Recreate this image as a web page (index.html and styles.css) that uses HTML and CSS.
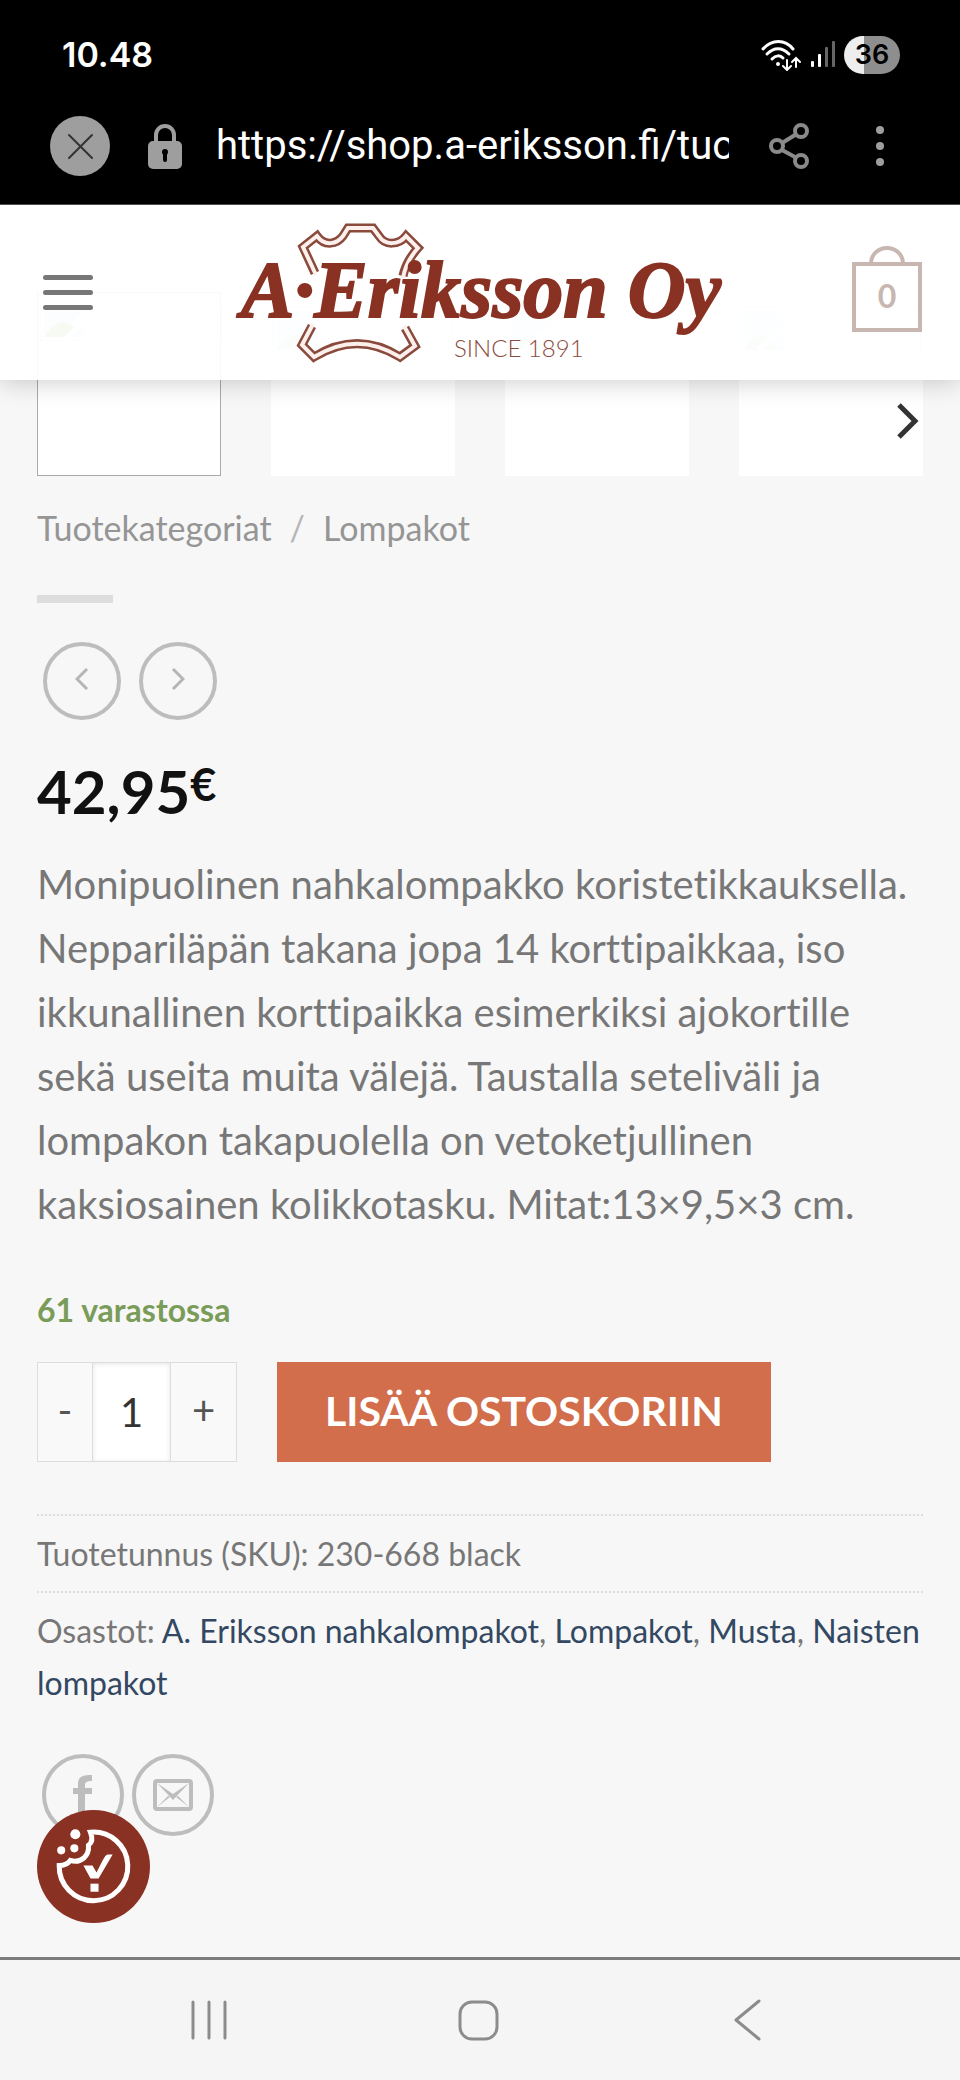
FILE: index.html
```html
<!DOCTYPE html>
<html lang="fi">
<head>
    <meta charset="UTF-8">
    <meta name="viewport" content="width=device-width, initial-scale=1">
    <title>A. Eriksson Oy</title>
    <link rel="stylesheet" href="styles.css">
</head>
<body>

    <!-- phone status bar -->
    <div class="status-bar">
        <span class="clock">10.48</span>
        <div class="status-icons">
            <svg width="42" height="32" viewBox="0 0 42 32" fill="none" stroke="#fff" stroke-width="3" stroke-linecap="round">
                <path d="M3 10C12 0 25 0 33 10"/>
                <path d="M7 15C14 8 22 8 29 15"/>
                <path d="M12 20C16 16 20 16 23 19"/>
                <circle cx="18" cy="25" r="2" fill="#fff" stroke="none"/>
                <path d="M27 21v9M23 27l4 4 4-4" stroke-width="2"/>
                <path d="M36 28V19M32 23l4-4 4 4" stroke-width="2"/>
            </svg>
            <svg width="26" height="28" viewBox="0 0 26 28">
                <rect x="1" y="20" width="3" height="6" rx="1" fill="#fff"/>
                <rect x="8" y="13" width="3" height="13" rx="1" fill="#fff"/>
                <rect x="15" y="6" width="3" height="20" rx="1" fill="#666"/>
                <rect x="22" y="0" width="3" height="26" rx="1" fill="#666"/>
            </svg>
            <span class="battery">36</span>
        </div>
    </div>

    <!-- browser bar -->
    <div class="url-bar">
        <button class="close-tab" aria-label="Sulje">
            <svg width="60" height="60" viewBox="0 0 60 60" stroke="#333" stroke-width="2" stroke-linecap="round">
                <circle cx="30" cy="30" r="30" fill="#9e9e9e" stroke="none"/>
                <path d="M19 19l23 23M42 19L19 42"/>
            </svg>
        </button>
        <svg class="lock" width="34" height="46" viewBox="0 0 34 46">
            <path d="M8 20V12a9 9 0 0 1 18 0v8" fill="none" stroke="#9e9e9e" stroke-width="4"/>
            <rect x="0" y="18" width="34" height="28" rx="5" fill="#9e9e9e"/>
            <circle cx="17" cy="29" r="3" fill="#000"/>
            <path d="M17 29v8" stroke="#000" stroke-width="4" stroke-linecap="round"/>
        </svg>
        <input class="url" type="text" aria-label="Osoite" value="https://shop.a-eriksson.fi/tuo">
        <button class="share" aria-label="Jaa">
            <svg width="40" height="46" viewBox="0 0 40 46" fill="none" stroke="#8a8a8a" stroke-width="4">
                <path d="M13 20l13-8M13 27l13 7"/>
                <circle cx="8" cy="23" r="6"/>
                <circle cx="32" cy="8" r="6"/>
                <circle cx="32" cy="38" r="6"/>
            </svg>
        </button>
        <button aria-label="Valikko">
            <svg width="10" height="42" viewBox="0 0 10 42" fill="#9e9e9e">
                <circle cx="5" cy="5" r="4"/>
                <circle cx="5" cy="21" r="4"/>
                <circle cx="5" cy="37" r="4"/>
            </svg>
        </button>
    </div>

    <header class="header">
        <button class="menu" aria-label="Menu">
            <span></span>
            <span></span>
            <span></span>
        </button>
        <a class="logo" href="#">
            <svg width="500" height="146" viewBox="0 0 500 146">
                <g class="hide-outer">
                    <path d="M82 53L70 27 84 16C92 27 104 24 110 16L115 8H140L146 16C152 26 166 25 173 16L185 28C176 38 172 46 170 56"/>
                    <path d="M79 106L69 125 81 137C110 119 138 119 167 137L182 126 172 108"/>
                </g>
                <g class="hide-inner">
                    <path d="M83 55L70 27 84 16C92 27 104 24 110 16L115 8H140L146 16C152 26 166 25 173 16L185 28C176 38 172 46 170 58"/>
                    <path d="M80 104L69 125 81 137C110 119 138 119 167 137L182 126 171 106"/>
                </g>
                <text class="logo-name" x="8" y="97">A·Eriksson Oy</text>
                <text class="logo-since" x="221" y="137">SINCE 1891</text>
            </svg>
        </a>
        <a class="cart" href="#" aria-label="Ostoskori">
            <svg width="72" height="94" viewBox="0 0 72 94" fill="none" stroke="#c8b6b0" stroke-width="4">
                <path d="M20 17a16 15 0 0 1 32 0"/>
                <rect x="3" y="18" width="66" height="66"/>
                <text class="cart-count" x="36" y="62">0</text>
            </svg>
        </a>
    </header>

    <main class="product">

        <div class="gallery">
            <div class="thumb active"><span class="missing"><svg width="40" height="26" viewBox="0 0 40 26"><path d="M0 0h40L14 26H0z" fill="#c5d8ee"/><path d="M2 26c6-16 20-18 28-10L20 26z" fill="#7fb25a"/><path d="M26 26l14-12v12z" fill="#c5d8ee"/></svg></span></div>
            <div class="thumb"><span class="missing"><svg width="40" height="40" viewBox="0 0 40 40"><path d="M0 0h28l12 12v28H0z" fill="#e3ecf6"/><path d="M0 40c6-16 22-18 30-6l4 6z" fill="#c3dcb2"/><path d="M14 40L40 16" stroke="#fff" stroke-width="6"/></svg></span></div>
            <div class="thumb"><span class="missing"><svg width="40" height="40" viewBox="0 0 40 40"><path d="M0 0h28l12 12v28H0z" fill="#e3ecf6"/><path d="M0 40c6-16 22-18 30-6l4 6z" fill="#c3dcb2"/><path d="M14 40L40 16" stroke="#fff" stroke-width="6"/></svg></span></div>
            <div class="thumb"><span class="missing"><svg width="40" height="40" viewBox="0 0 40 40"><path d="M0 0h28l12 12v28H0z" fill="#e3ecf6"/><path d="M0 40c6-16 22-18 30-6l4 6z" fill="#c3dcb2"/><path d="M14 40L40 16" stroke="#fff" stroke-width="6"/></svg></span></div>
            <button class="next" aria-label="Seuraava">
                <svg width="22" height="36" viewBox="0 0 22 36" fill="none" stroke="#333" stroke-width="5">
                    <path d="M2 2l16 16L2 34"/>
                </svg>
            </button>
        </div>

        <nav class="breadcrumb">
            <a href="#">Tuotekategoriat</a>
            <span class="divider">/</span>
            <a href="#">Lompakot</a>
        </nav>

        <div class="small-bar"></div>

        <div class="prev-next">
            <a href="#" aria-label="Edellinen tuote">
                <svg width="14" height="22" viewBox="0 0 14 22"><path d="M12 1L2 11l10 10"/></svg>
            </a>
            <a href="#" aria-label="Seuraava tuote">
                <svg width="14" height="22" viewBox="0 0 14 22"><path d="M2 1l10 10L2 21"/></svg>
            </a>
        </div>

        <p class="price">42,95<span class="currency">€</span></p>

        <p class="description">Monipuolinen nahkalompakko koristetikkauksella. Nepparil&auml;p&auml;n takana jopa 14 korttipaikkaa, iso ikkunallinen korttipaikka esimerkiksi ajokortille sek&auml; useita muita v&auml;lej&auml;. Taustalla seteliv&auml;li ja lompakon takapuolella on vetoketjullinen kaksiosainen kolikkotasku. Mitat:13×9,5×3 cm.</p>

        <p class="stock">61 varastossa</p>

        <form class="cart-form">
            <div class="quantity">
                <button type="button">-</button>
                <input type="text" inputmode="numeric" aria-label="Määrä" value="1">
                <button type="button">+</button>
            </div>
            <button class="add-to-cart" type="button">LISÄÄ OSTOSKORIIN</button>
        </form>

        <div class="meta">
            <p>Tuotetunnus (SKU): 230-668 black</p>
            <p>Osastot: <a href="#">A. Eriksson nahkalompakot</a>, <a href="#">Lompakot</a>, <a href="#">Musta</a>, <a href="#">Naisten lompakot</a></p>
        </div>

        <div class="social">
            <a href="#" aria-label="Facebook">
                <svg width="20" height="42" viewBox="0 0 20 42" fill="#bdbdbd">
                    <path d="M5 42V20H0v-6h5V10C5 3 9 1 19 1v6c-5 0-7 1-7 4v3h7v6h-7v22z"/>
                </svg>
            </a>
            <a href="#" aria-label="Sähköposti">
                <svg width="40" height="32" viewBox="0 0 40 32">
                    <rect x="2" y="2" width="36" height="28" rx="2" fill="none" stroke="#bdbdbd" stroke-width="4"/>
                    <path d="M4 4l16 17L36 4 20 15zM4 28l11-11 2 1zM36 28L25 17l-2 1z" fill="#bdbdbd"/>
                </svg>
            </a>
        </div>

    </main>

    <!-- cookie consent button -->
    <button class="cookie" aria-label="Evästeasetukset">
        <svg width="113" height="113" viewBox="0 0 112 112">
            <g fill="#fff">
                <circle cx="38" cy="24" r="5"/>
                <circle cx="24" cy="40" r="4"/>
                <circle cx="37" cy="38" r="4"/>
                <path d="M46 55h9l4 7 6-12q3-6 5-6h5L61 68h-8z"/>
                <rect x="53" y="73" width="8" height="8"/>
            </g>
            <path d="M53 22A34 34 0 1 1 22 55C27 55 30 54 33 50C43 53 52 46 51 35C55 32 55 27 53 22z" fill="none" stroke="#fff" stroke-width="5"/>
        </svg>
    </button>

    <!-- phone navigation -->
    <div class="nav-bar">
        <button aria-label="Viimeisimmät">
            <svg width="42" height="42" viewBox="0 0 42 42"><path d="M5 3v36M21 3v36M37 3v36"/></svg>
        </button>
        <button aria-label="Koti">
            <svg width="42" height="42" viewBox="0 0 42 42"><rect x="3" y="3" width="37" height="37" rx="12"/></svg>
        </button>
        <button aria-label="Takaisin">
            <svg width="42" height="42" viewBox="0 0 42 42"><path d="M33 2L10 21l23 19"/></svg>
        </button>
    </div>

</body>
</html>
```
FILE: styles.css
```css
* {
    box-sizing: border-box;
}

body {
    margin: 0;
    min-height: 100vh;
    display: flex;
    flex-direction: column;
    background: #f7f7f7;
    color: #777;
    font-family: Lato, sans-serif;
    font-size: 40px;
    font-variant-ligatures: none;
    line-height: 64px;
}

p {
    margin: 0;
}

a {
    color: #334862;
    text-decoration: none;
}

button {
    padding: 0;
    border: none;
    background: none;
    font-family: inherit;
    cursor: pointer;
}

svg {
    display: block;
}

/* status bar */
.status-bar {
    display: flex;
    justify-content: space-between;
    align-items: center;
    height: 88px;
    padding: 22px 60px 0 62px;
    background: #000;
    color: #fff;
}

.clock {
    font-family: Inter, sans-serif;
    font-size: 34px;
    font-weight: 600;
}

.status-icons {
    display: flex;
    align-items: center;
    gap: 8px;
}

.battery {
    width: 56px;
    height: 38px;
    border-radius: 19px;
    background: linear-gradient(to right, #eee 20px, #8e8e8e 20px);
    color: #000;
    font-family: Inter, sans-serif;
    font-size: 27px;
    font-weight: 600;
    line-height: 38px;
    text-align: center;
}

/* url bar */
.url-bar {
    display: flex;
    align-items: center;
    height: 117px;
    padding: 0 75px 0 50px;
    border-bottom: 1px solid #555;
    background: #000;
}

.lock {
    margin: 0 34px 0 38px;
}

.url {
    flex: 1;
    min-width: 0;
    padding: 0;
    border: none;
    background: none;
    color: #fff;
    font-family: Roboto, sans-serif;
    font-size: 40px;
    line-height: 48px;
}

.share {
    margin: 0 66px 0 40px;
}

.header {
    position: relative;
    z-index: 2;
    display: flex;
    justify-content: space-between;
    align-items: center;
    height: 175px;
    padding: 0 37px 0 43px;
    background: rgba(255, 255, 255, 0.93);
    box-shadow: 0 2px 24px rgba(0, 0, 0, 0.2);
}

.menu {
    display: flex;
    flex-direction: column;
    gap: 10px;
    width: 72px;
}

.menu span {
    width: 50px;
    height: 5px;
    border-radius: 3px;
    background: #777;
}

.hide-outer path {
    fill: none;
    stroke: #8a4a3c;
    stroke-width: 9;
}

.hide-inner path {
    fill: none;
    stroke: #fdf0ec;
    stroke-width: 4;
}

.logo-name {
    fill: #893122;
    stroke: #893122;
    stroke-width: 2;
    font-family: "Liberation Serif", serif;
    font-size: 80px;
    font-weight: bold;
    font-style: italic;
}

.logo-since {
    fill: #8a4a3c;
    font-size: 24px;
    font-weight: 300;
}

.cart-count {
    fill: #c8b6b0;
    stroke: none;
    font-size: 32px;
    font-weight: bold;
    text-anchor: middle;
}

/* product */
.product {
    flex: 1;
    padding: 0 37px;
}

.gallery {
    position: relative;
    display: grid;
    grid-template-columns: repeat(4, 1fr);
    gap: 50px;
    margin-top: -88px;
}

.thumb {
    aspect-ratio: 1;
    padding: 14px 2px;
    background: #fff;
}

.thumb.active {
    border: 1px solid #aaa;
}

.missing {
    display: block;
    padding: 3px;
    border: 1px solid #ddd;
}

.next {
    position: absolute;
    right: 4px;
    bottom: 37px;
}

.breadcrumb {
    display: flex;
    gap: 18px;
    margin-top: 24px;
    font-size: 34px;
    line-height: 56px;
}

.breadcrumb a {
    color: #959595;
}

.divider {
    color: #b5b5b5;
}

.small-bar {
    width: 76px;
    height: 8px;
    margin-top: 39px;
    background: #ddd;
}

.prev-next {
    display: flex;
    gap: 18px;
    margin: 39px 0 0 6px;
}

.prev-next a {
    display: flex;
    justify-content: center;
    align-items: center;
    width: 78px;
    height: 78px;
    padding-bottom: 5px;
    border: 4px solid #bdbdbd;
    border-radius: 50%;
}

.prev-next path {
    fill: none;
    stroke: #b5b5b5;
    stroke-width: 3;
}

.price {
    margin-top: 38px;
    color: #111;
    font-size: 60px;
    font-weight: bold;
    line-height: 66px;
}

.currency {
    font-size: 45px;
    line-height: 45px;
    vertical-align: 13px;
}

.description {
    margin-top: 28px;
}

.stock {
    margin-top: 48px;
    color: #7a9c59;
    font-size: 32px;
    font-weight: bold;
    line-height: 52px;
}

.cart-form {
    display: flex;
    gap: 40px;
    margin-top: 26px;
}

.quantity {
    display: flex;
    width: 200px;
    height: 100px;
    border: 1px solid #ddd;
}

.quantity button {
    flex: 5;
    padding-bottom: 4px;
    background: #f9f9f9;
    color: #555;
    font-size: 40px;
}

.quantity button:last-child {
    flex: 6;
}

.quantity input {
    width: 79px;
    padding: 0;
    border: solid #ddd;
    border-width: 0 1px;
    border-radius: 0;
    background: #fff;
    box-shadow: inset 0 1px 5px rgba(0, 0, 0, 0.1);
    color: #333;
    font-family: inherit;
    font-size: 40px;
    text-align: center;
}

.add-to-cart {
    padding: 0 48px 4px;
    background: #d26e4b;
    color: #fff;
    font-size: 41px;
    font-weight: bold;
}

.meta {
    margin-top: 52px;
    font-size: 32px;
    line-height: 52px;
}

.meta p {
    padding: 12px 0 11px;
    border-top: 2px dotted #ddd;
}

.social {
    display: flex;
    gap: 8px;
    margin: 34px 0 0 5px;
}

.social a {
    display: flex;
    justify-content: center;
    align-items: center;
    width: 82px;
    height: 82px;
    border: 4px solid #bdbdbd;
    border-radius: 50%;
}

.cookie {
    position: fixed;
    left: 37px;
    bottom: 157px;
    z-index: 3;
    border-radius: 50%;
    background: #893122;
}

/* bottom navigation */
.nav-bar {
    display: flex;
    justify-content: space-around;
    align-items: center;
    height: 123px;
    padding: 0 78px 0 74px;
    border-top: 3px solid #7d7d7d;
    background: #f5f5f5;
}

.nav-bar svg {
    fill: none;
    stroke: #8c8c8c;
    stroke-width: 3;
    stroke-linecap: round;
    stroke-linejoin: round;
}
```
